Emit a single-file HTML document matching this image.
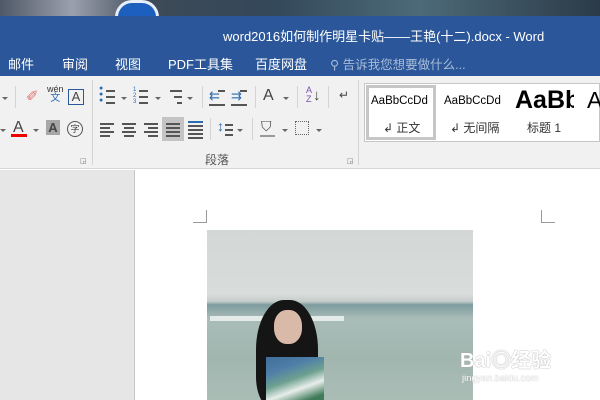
<!DOCTYPE html>
<html><head><meta charset="utf-8"><style>
*{margin:0;padding:0;box-sizing:border-box}
body{width:600px;height:400px;overflow:hidden;position:relative;font-family:"Liberation Sans","Noto Sans CJK SC",sans-serif;background:#fff}
.a{position:absolute}
.tab{position:absolute;top:54px;color:#fff;font-size:13px}
.ic{position:absolute;color:#444;font-size:13px}
.sep{position:absolute;width:1px;background:#d4d4d4}
.ln{position:absolute;height:1.5px;background:#555}
.dd{position:absolute;width:0;height:0;border-left:3px solid transparent;border-right:3px solid transparent;border-top:3px solid #666}
</style></head><body>
<div class="a" style="left:0;top:0;width:600px;height:17px;background:linear-gradient(90deg,#4e5866 0%,#9ba0ad 12%,#3e4a58 25%,#33485a 45%,#4d6a78 70%,#2b3a48 100%)"></div>
<div class="a" style="left:115px;top:0;width:44px;height:17px;border-radius:22px 22px 0 0;background:#1d5fbf;border:3px solid #e8eef8;border-bottom:none"></div>
<div class="a" style="left:0;top:16px;width:600px;height:60px;background:#2b579a"></div>
<div class="a" style="left:223px;top:26px;color:#fff;font-size:13px">word2016如何制作明星卡贴——王艳(十二).docx - Word</div>
<div class="tab" style="left:8px">邮件</div>
<div class="tab" style="left:62px">审阅</div>
<div class="tab" style="left:115px">视图</div>
<div class="tab" style="left:168px">PDF工具集</div>
<div class="tab" style="left:255px">百度网盘</div>
<div class="tab" style="left:330px;color:#a9bcd8;font-size:12.5px">⚲ 告诉我您想要做什么...</div>
<div class="a" style="left:0;top:76px;width:600px;height:93px;background:#f1f1f1;border-bottom:1px solid #d6d6d6"></div>
<div class="sep" style="left:92px;top:80px;height:85px"></div>
<div class="sep" style="left:358px;top:80px;height:85px"></div>
<div class="sep" style="left:15px;top:86px;height:22px"></div>
<div class="sep" style="left:202px;top:86px;height:22px"></div>
<div class="sep" style="left:255px;top:86px;height:22px"></div>
<div class="sep" style="left:297px;top:86px;height:22px"></div>
<div class="sep" style="left:328px;top:86px;height:22px"></div>
<div class="sep" style="left:210px;top:118px;height:22px"></div>
<div class="sep" style="left:252px;top:118px;height:22px"></div>
<div class="dd" style="left:2px;top:97px"></div>
<div class="ic" style="left:26px;top:87px;color:#e07070;font-size:15px">✐</div>
<div class="ic" style="left:47px;top:85px;font-size:9px;line-height:9px;text-align:center;color:#333">wén<br><span style="color:#2b6cb0;font-size:10px">文</span></div>
<div class="ic" style="left:68px;top:89px;width:16px;height:16px;border:1px solid #2b579a;text-align:center;font-size:13px;line-height:14px">A</div>
<div class="ic" style="left:99px;top:86px;font-size:7px;line-height:6px;color:#2b6cb0">●<br>●<br>●</div>
<div class="ln" style="left:106px;top:90px;width:9px"></div><div class="ln" style="left:106px;top:96px;width:9px"></div><div class="ln" style="left:106px;top:102px;width:9px"></div>
<div class="dd" style="left:121px;top:97px"></div>
<div class="ic" style="left:133px;top:87px;font-size:6px;line-height:6px;color:#2b6cb0">1<br>2<br>3</div>
<div class="ln" style="left:139px;top:90px;width:9px"></div><div class="ln" style="left:139px;top:96px;width:9px"></div><div class="ln" style="left:139px;top:102px;width:9px"></div>
<div class="dd" style="left:155px;top:97px"></div>
<div class="ln" style="left:170px;top:90px;width:12px"></div><div class="ln" style="left:174px;top:96px;width:8px"></div><div class="ln" style="left:177px;top:102px;width:5px"></div>
<div class="dd" style="left:187px;top:97px"></div>
<div class="ic" style="left:209px;top:88px;color:#2b6cb0;font-size:13px">⇇</div><div class="ln" style="left:218px;top:90px;width:7px"></div><div class="ln" style="left:209px;top:104px;width:16px"></div>
<div class="ic" style="left:231px;top:88px;color:#2b6cb0;font-size:13px">⇉</div><div class="ln" style="left:240px;top:90px;width:7px"></div><div class="ln" style="left:231px;top:104px;width:16px"></div>
<div class="ic" style="left:263px;top:87px;font-size:16px">A</div><div class="dd" style="left:283px;top:97px"></div>
<div class="ic" style="left:306px;top:86px;font-size:9px;line-height:9px;color:#7b4fb0">A<br>Z</div><div class="ic" style="left:313px;top:87px;font-size:15px">↓</div>
<div class="ic" style="left:339px;top:88px;font-size:12px">↵</div>
<div class="dd" style="left:0;top:129px"></div>
<div class="ic" style="left:13px;top:119px;font-size:16px">A</div>
<div class="a" style="left:11px;top:134px;width:16px;height:3px;background:#e00"></div>
<div class="dd" style="left:33px;top:129px"></div>
<div class="ic" style="left:46px;top:120px;width:14px;height:15px;background:#a6a6a6;text-align:center;font-weight:bold;color:#444;line-height:15px">A</div>
<div class="ic" style="left:67px;top:121px;width:16px;height:16px;border:1px solid #555;border-radius:50%;font-size:9px;text-align:center;line-height:14px">字</div>
<div class="a" style="left:162px;top:117px;width:22px;height:24px;background:#c4c4c4"></div>
<div class="ln" style="left:100px;top:123px;width:14px"></div><div class="ln" style="left:100px;top:127px;width:10px"></div><div class="ln" style="left:100px;top:131px;width:14px"></div><div class="ln" style="left:100px;top:135px;width:10px"></div>
<div class="ln" style="left:122px;top:123px;width:14px"></div><div class="ln" style="left:124px;top:127px;width:10px"></div><div class="ln" style="left:122px;top:131px;width:14px"></div><div class="ln" style="left:124px;top:135px;width:10px"></div>
<div class="ln" style="left:144px;top:123px;width:14px"></div><div class="ln" style="left:148px;top:127px;width:10px"></div><div class="ln" style="left:144px;top:131px;width:14px"></div><div class="ln" style="left:148px;top:135px;width:10px"></div>
<div class="ln" style="left:166px;top:123px;width:14px"></div><div class="ln" style="left:166px;top:127px;width:14px"></div><div class="ln" style="left:166px;top:131px;width:14px"></div><div class="ln" style="left:166px;top:135px;width:14px"></div>
<div class="ln" style="left:188px;top:121px;width:15px;background:#2b6cb0"></div><div class="ln" style="left:188px;top:125px;width:15px"></div><div class="ln" style="left:188px;top:129px;width:15px"></div><div class="ln" style="left:188px;top:133px;width:15px"></div><div class="ln" style="left:188px;top:137px;width:15px"></div>
<div class="ic" style="left:217px;top:118px;color:#2b6cb0;font-size:14px">↕</div><div class="ln" style="left:225px;top:124px;width:8px"></div><div class="ln" style="left:225px;top:129px;width:8px"></div><div class="ln" style="left:225px;top:134px;width:8px"></div><div class="dd" style="left:237px;top:129px"></div>
<div class="ic" style="left:261px;top:118px;font-size:14px">⛉</div><div class="ln" style="left:260px;top:135px;width:15px;background:#999"></div><div class="dd" style="left:282px;top:129px"></div>
<div class="a" style="left:295px;top:121px;width:14px;height:14px;border:1px dotted #666"></div><div class="dd" style="left:316px;top:129px"></div>
<div class="ic" style="left:205px;top:151px;font-size:12px;color:#555">段落</div>
<div class="ic" style="left:80px;top:157px;font-size:7px;color:#777">◲</div>
<div class="ic" style="left:347px;top:157px;font-size:7px;color:#777">◲</div>
<div class="a" style="left:364px;top:83px;width:236px;height:59px;background:#fff;border:1px solid #c6c6c6"></div>
<div class="a" style="left:366px;top:85px;width:70px;height:55px;border:3px solid #c6c6c6"></div>
<div class="ic" style="left:371px;top:95px;font-size:11.5px;color:#000;width:61px;overflow:hidden;white-space:nowrap">AaBbCcDd</div>
<div class="ic" style="left:383px;top:119px;font-size:12px;color:#333">↲ 正文</div>
<div class="ic" style="left:444px;top:95px;font-size:11.5px;color:#000;width:59px;overflow:hidden;white-space:nowrap">AaBbCcDd</div>
<div class="ic" style="left:450px;top:119px;font-size:12px;color:#333">↲ 无间隔</div>
<div class="ic" style="left:515px;top:86px;font-size:25px;font-weight:bold;color:#000;width:59px;overflow:hidden;white-space:nowrap">AaBb</div>
<div class="ic" style="left:527px;top:119px;font-size:12px;color:#333">标题 1</div>
<div class="ic" style="left:587px;top:87px;font-size:23px;color:#000">A</div>
<div class="a" style="left:0;top:170px;width:135px;height:230px;background:#e6e6e6;border-right:1px solid #c8c8c8"></div>
<div class="a" style="left:193px;top:210px;width:14px;height:13px;border-right:1px solid #999;border-bottom:1px solid #999"></div>
<div class="a" style="left:541px;top:210px;width:14px;height:13px;border-left:1px solid #999;border-bottom:1px solid #999"></div>
<div class="a" style="left:207px;top:230px;width:266px;height:170px;overflow:hidden;background:linear-gradient(180deg,#d3d8d6 0%,#d8dcdb 38%,#c4ccca 42%,#7e9c9e 44%,#a9bcb8 52%,#a2b6b0 75%,#aabdb5 100%)">
<div class="a" style="left:3px;top:86px;width:134px;height:5px;background:#eef2f0;opacity:.85"></div>
<div class="a" style="left:49px;top:70px;width:62px;height:110px;background:#151515;border-radius:45% 45% 30% 30%"></div>
<div class="a" style="left:67px;top:80px;width:28px;height:34px;background:#d9b9a8;border-radius:45%"></div>
<div class="a" style="left:59px;top:127px;width:58px;height:50px;background:linear-gradient(160deg,#3f6f9a 0%,#4f7fa8 25%,#6ea090 45%,#e8eeea 62%,#3f7a5a 82%)"></div>
</div>
<div class="ic" style="left:460px;top:344px;font-size:20px;color:#fff;font-weight:bold;text-shadow:0 0 1px #aaa,0 0 1px #aaa">Bai◎经验</div>
<div class="ic" style="left:462px;top:373px;font-size:9.5px;color:#fff;text-shadow:0 0 1px #999">jingyan.baidu.com</div>
</body></html>
